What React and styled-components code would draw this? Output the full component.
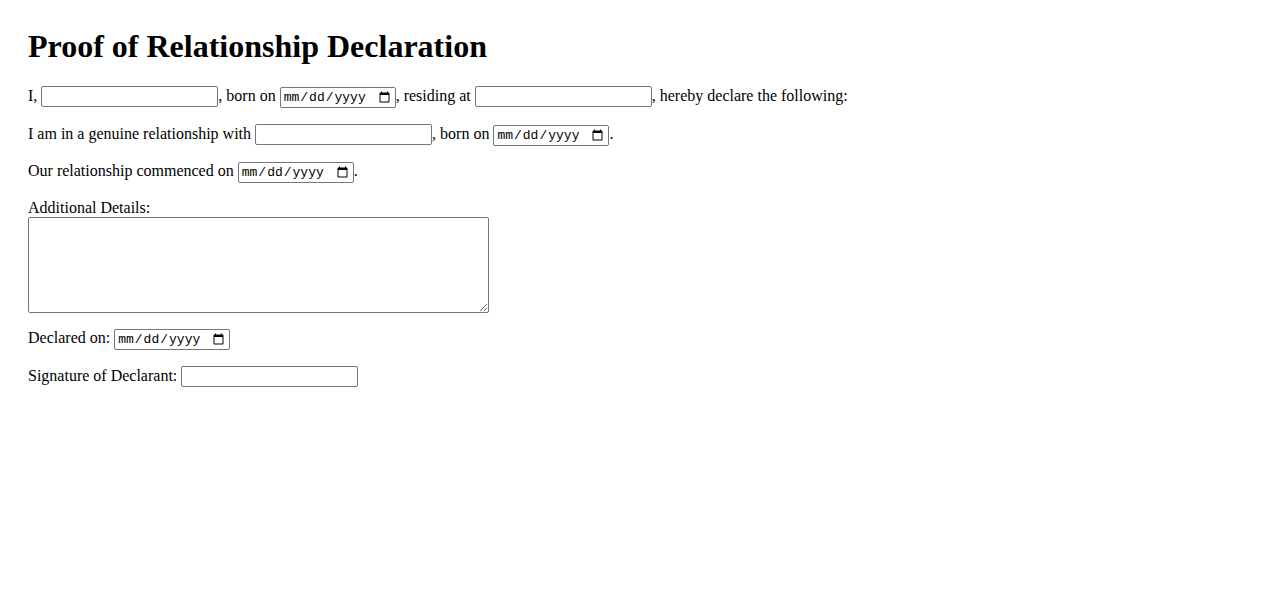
import styled, { createGlobalStyle } from 'styled-components';

const GlobalStyle = createGlobalStyle`
    body {
        margin: 0;
        background: #fff;
        color: #000;
        font-family: "Liberation Serif", "Times New Roman", serif;
        font-size: 16px;
    }
`;

const Page = styled.main`
    padding: 28px;
`;

const Title = styled.h1`
    font-size: 32px;
    font-weight: bold;
    margin: 0 0 21.44px;
`;

const Line = styled.p`
    margin: 16px 0;
`;

const TextField = styled.input`
    box-sizing: border-box;
    width: 177px;
    height: 21px;
    margin: 0;
    padding: 1px 2px;
    border: 1px solid #767676;
    border-radius: 2px;
    font-family: "Liberation Sans", Arial, sans-serif;
    font-size: 13.33px;
    vertical-align: baseline;
`;

const DateField = styled.input`
    box-sizing: border-box;
    width: 116px;
    height: 21px;
    margin: 0;
    padding: 1px 2px;
    border: 1px solid #767676;
    border-radius: 2px;
    font-family: "Liberation Mono", "DejaVu Sans Mono", monospace;
    font-size: 13px;
    color: #000;
`;

const FieldLabel = styled.label`
    display: block;
`;

const DetailsBox = styled.textarea`
    display: block;
    box-sizing: border-box;
    width: 461px;
    height: 96px;
    margin: 0;
    padding: 2px;
    border: 1px solid #767676;
    border-radius: 2px;
    font-family: "Liberation Mono", monospace;
    font-size: 13.33px;
`;

export default function App() {
    return (
        <>
            <GlobalStyle />
            <Page>
                <Title>Proof of Relationship Declaration</Title>
                <Line>
                    I, <TextField type="text" />, born on <DateField type="date" />, residing at{' '}
                    <TextField type="text" />, hereby declare the following:
                </Line>
                <Line>
                    I am in a genuine relationship with <TextField type="text" />, born on{' '}
                    <DateField type="date" />.
                </Line>
                <Line>
                    Our relationship commenced on <DateField type="date" />.
                </Line>
                <Line>
                    <FieldLabel htmlFor="details">Additional Details:</FieldLabel>
                    <DetailsBox id="details" />
                </Line>
                <Line>
                    Declared on: <DateField type="date" />
                </Line>
                <Line>
                    Signature of Declarant: <TextField type="text" />
                </Line>
            </Page>
        </>
    );
}
